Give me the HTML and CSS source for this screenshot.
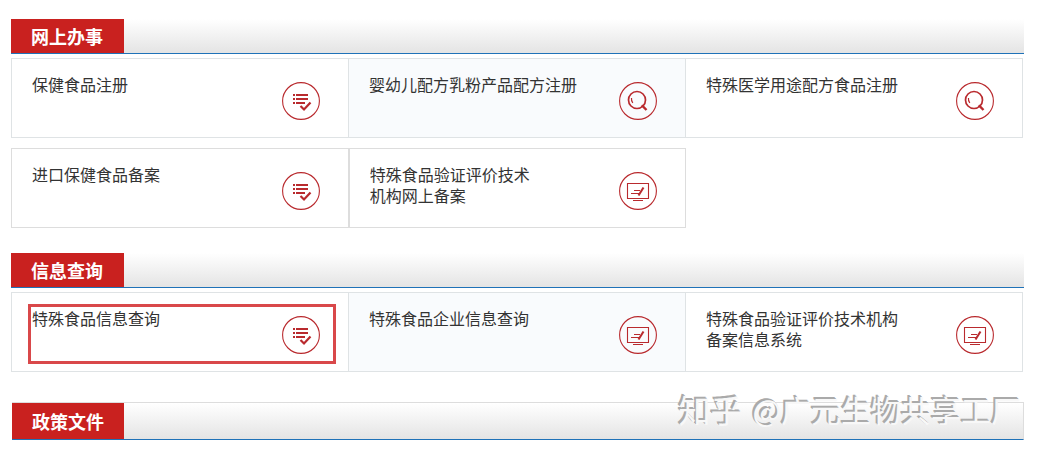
FILE: index.html
```
<!DOCTYPE html>
<html lang="zh-CN">
<head>
  <meta charset="UTF-8" />
  <meta name="viewport" content="width=device-width, initial-scale=1.0"/>
  <title>特殊食品</title>
  <link rel="stylesheet" href="styles.css">
</head>
<body>

  <!-- icons -->
  <svg class="sprite" aria-hidden="true">
    <symbol id="icon-list" viewBox="0 0 38 38">
      <circle cx="19" cy="19" r="18.4" fill="none" stroke="currentColor" stroke-width="1.1"/>
      <path d="M11 13h2M11 17h2M11 21h2M14 13h12M14 17h12M14 21h9" fill="none" stroke="currentColor" stroke-width="2"/>
      <path d="M18.5 24l3.5 3.5 6.5-7" fill="none" stroke="currentColor" stroke-width="2.2"/>
    </symbol>
    <symbol id="icon-search" viewBox="0 0 38 38">
      <circle cx="19" cy="19" r="18.4" fill="none" stroke="currentColor" stroke-width="1.1"/>
      <circle cx="18" cy="18" r="8.5" fill="none" stroke="currentColor" stroke-width="1.7"/>
      <path d="M12.5 16c-.3 2 .2 3.5 1.3 5" fill="none" stroke="currentColor" stroke-width="1.2"/>
      <path d="M22.5 23.5l1.5 1 3.5 3.5" fill="none" stroke="currentColor" stroke-width="2.4"/>
    </symbol>
    <symbol id="icon-screen" viewBox="0 0 38 38">
      <circle cx="19" cy="19" r="18.4" fill="none" stroke="currentColor" stroke-width="1.1"/>
      <path d="M8.5 11.5h21v15h-21zM14 28.5h10" fill="none" stroke="currentColor" stroke-width="1.1"/>
      <path d="M15 18.5h6M12 21.5h8" fill="none" stroke="currentColor" stroke-width="1.2"/>
      <path d="M24.5 15.5l-5 8" fill="none" stroke="currentColor" stroke-width="2"/>
    </symbol>
  </svg>

  <main>
    <section>
      <div class="head"><h2>网上办事</h2></div>
      <div class="row">
        <a class="item" href="#"><span>保健食品注册</span><svg class="icon"><use href="#icon-list"/></svg></a>
        <a class="item shaded" href="#"><span>婴幼儿配方乳粉产品配方注册</span><svg class="icon"><use href="#icon-search"/></svg></a>
        <a class="item" href="#"><span>特殊医学用途配方食品注册</span><svg class="icon"><use href="#icon-search"/></svg></a>
      </div>
      <div class="row separate">
        <a class="item" href="#"><span>进口保健食品备案</span><svg class="icon"><use href="#icon-list"/></svg></a>
        <a class="item" href="#"><span>特殊食品验证评价技术<br>机构网上备案</span><svg class="icon"><use href="#icon-screen"/></svg></a>
      </div>
    </section>

    <section>
      <div class="head"><h2>信息查询</h2></div>
      <div class="row">
        <a class="item marked" href="#"><span>特殊食品信息查询</span><svg class="icon"><use href="#icon-list"/></svg></a>
        <a class="item shaded" href="#"><span>特殊食品企业信息查询</span><svg class="icon"><use href="#icon-screen"/></svg></a>
        <a class="item" href="#"><span>特殊食品验证评价技术机构<br>备案信息系统</span><svg class="icon"><use href="#icon-screen"/></svg></a>
      </div>
    </section>

    <section class="policy">
      <div class="head"><h2>政策文件</h2></div>
      <div class="watermark"><span class="site">知乎</span><span>@广元生物共享工厂</span></div>
    </section>
  </main>

</body>
</html>
```
FILE: styles.css
```
* {
  box-sizing: border-box;
}

body {
  margin: 0;
  padding: 19px 23px 12px 11px;
  background: #fff;
  color: #333;
  font-family: "Noto Sans CJK SC", sans-serif;
  font-size: 16px;
  line-height: 21px;
}

.sprite {
  position: absolute;
  width: 0;
  height: 0;
}

section {
  margin-bottom: 25px;
}

.head {
  display: flex;
  height: 35px;
  margin-bottom: 4px;
  border-bottom: 1px solid #1f72b8;
  background: linear-gradient(#fff, #e4e4e4);
}

h2 {
  display: flex;
  align-items: center;
  margin: 0;
  padding: 0 21px 0 20px;
  background: #c9211f;
  color: #fff;
  font-size: 18px;
  font-weight: bold;
}

.row {
  display: grid;
  grid-template-columns: repeat(3, 1fr);
  margin-right: 1px;
  border-right: 1px solid #dfe3e5;
}

.item {
  position: relative;
  display: flex;
  justify-content: space-between;
  min-height: 80px;
  padding: 15px 28px 15px 20px;
  border: 1px solid #dfe3e5;
  border-right: none;
  color: #333;
  text-decoration: none;
}

.shaded {
  background: #f9fbfd;
}

.separate {
  margin-top: 10px;
  margin-right: 0;
  border-right: none;
}

.separate .item {
  border: 1px solid #ddd;
}

.icon {
  flex: none;
  width: 38px;
  height: 38px;
  margin-top: 8px;
  color: #b92a2e;
}

/* red frame round the entry */
.marked::after {
  content: "";
  position: absolute;
  top: 11px;
  left: 16px;
  right: 12px;
  bottom: 7px;
  border: 3px solid #d9484a;
}

.policy {
  position: relative;
  margin: 30px 0 0 1px;
}

.policy .head {
  height: 38px;
  margin-bottom: 0;
  border-top: 1px solid #ddd;
  border-right: 1px solid #ddd;
}

.policy h2 {
  padding-right: 20px;
}

.watermark {
  position: absolute;
  top: -14px;
  right: 3px;
  display: flex;
  gap: 10px;
  color: #f8f8f8;
  font-size: 30px;
  line-height: 42px;
  white-space: nowrap;
  text-shadow: -1px -1px 0 #aaa, -2px -2px 0 #aaa;
}

.site {
  font-size: 32px;
}
```
